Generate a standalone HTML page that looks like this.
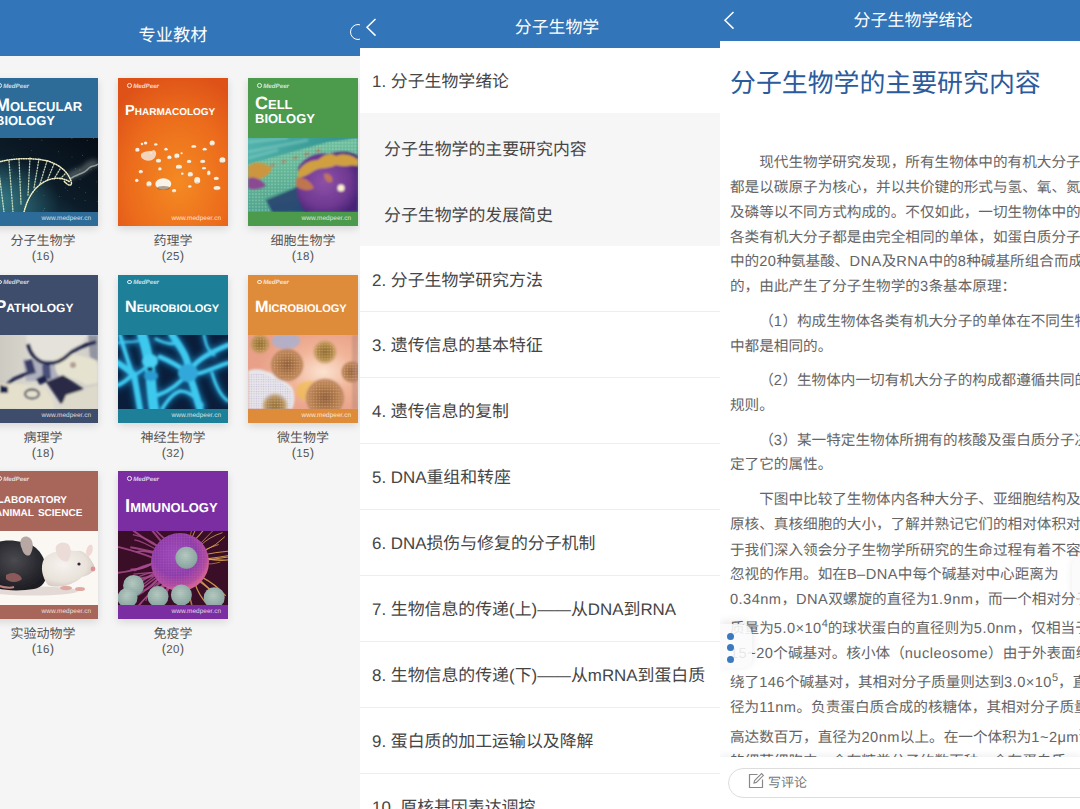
<!DOCTYPE html>
<html lang="zh-CN"><head><meta charset="utf-8">
<style>
*{margin:0;padding:0;box-sizing:border-box}
html,body{text-spacing-trim:space-all;text-rendering:geometricPrecision;width:1080px;height:809px;overflow:hidden;background:#f5f5f5;font-family:"Liberation Sans",sans-serif}
.abs{position:absolute}
.hdr{background:#3275b8;color:#fff}
.p1{left:0;top:0;width:380px;height:809px;background:#f5f5f5;overflow:hidden}
.p2{left:360px;top:0;width:360px;height:809px;background:#fff;overflow:hidden}
.p3{left:720px;top:0;width:360px;height:809px;background:#fff;overflow:hidden}
.cover{position:absolute;width:110px;height:148px;overflow:hidden;box-shadow:0 3px 8px rgba(0,0,0,0.12)}
.lbl{position:absolute;width:150px;text-align:center;font-size:13px;color:#555;line-height:15px}
.item{position:absolute;left:12px;font-size:16.9px;color:#454545;white-space:nowrap;line-height:20px}
.sep{position:absolute;left:0;width:361px;height:1px;background:#eeeef0}
.cover .img{position:absolute;left:0;width:110px;overflow:hidden}
.logo{position:absolute;left:9px;top:4.5px;font-size:6.2px;font-style:italic;font-weight:bold;color:rgba(255,255,255,0.78);line-height:8px;white-space:nowrap}
.lg{display:inline-block;width:4.6px;height:4.6px;border-radius:50%;border:1.3px solid rgba(255,255,255,0.85);margin-right:1.6px;vertical-align:-0.3px}
.ttl{position:absolute;left:7px;font-weight:bold;font-variant:small-caps;color:#fff;white-space:nowrap}
.url{position:absolute;right:7px;bottom:3px;font-size:6.5px;line-height:8px;white-space:nowrap}
.num{letter-spacing:0.3px}.num span{font-size:11.5px}
 .lt{letter-spacing:0.45px}
 .ln{position:absolute;left:10px;font-size:14.62px;color:#656565;white-space:nowrap;line-height:18px}
</style></head><body>

<!-- LEFT PANEL -->
<div class="abs p1">
  <div class="abs hdr" style="left:0;top:0;width:380px;height:56px"></div>
  <div class="abs" style="left:0;top:24.5px;width:346px;text-align:center;color:#fff;font-size:17.2px;line-height:20px">专业教材</div>
  <div class="abs" style="left:350px;top:24px;width:16px;height:16px;border:1.8px solid #fff;border-radius:50%"></div>
<div class="cover" style="left:-12px;top:78px;background:#2d6c99">
<div class="img" style="top:60px;height:74px"><svg width="110" height="74" viewBox="0 0 110 74" style="display:block"><defs><linearGradient id="g1" x1="1" y1="0" x2="0" y2="1"><stop offset="0" stop-color="#060d16"/><stop offset="0.55" stop-color="#0c1c28"/><stop offset="1" stop-color="#1f4f63"/></linearGradient>
<radialGradient id="g1b" cx="0.05" cy="0.85" r="0.6"><stop offset="0" stop-color="#3c8a94" stop-opacity="0.8"/><stop offset="1" stop-color="#3c8a94" stop-opacity="0"/></radialGradient>
<filter id="bl1" x="-20%" y="-20%" width="140%" height="140%"><feGaussianBlur stdDeviation="0.4"/></filter>
<filter id="bl2" x="-50%" y="-50%" width="200%" height="200%"><feGaussianBlur stdDeviation="2.5"/></filter></defs><rect width="110" height="74" fill="url(#g1)"/><rect width="110" height="74" fill="url(#g1b)"/><path d="M80,40 C88,32 94,36 100,28 C104,24 107,27 110,24" fill="none" stroke="#c8d4d0" stroke-width="7" opacity="0.35" filter="url(#bl2)"/><g filter="url(#bl1)"><path d="M0,27 C20,20 42,19 60,23 C72,27 80,34 83,43 C85,49 80,48 76,43" fill="none" stroke="#f3efc4" stroke-linecap="round" stroke-dasharray="1 1.4" stroke-width="1.5"/><path d="M36,74 C40,58 48,47 60,42 C68,39 76,40 82,44" fill="none" stroke="#f3efc4" stroke-linecap="round" stroke-dasharray="1 1.4" stroke-width="1.5"/><line x1="2" y1="28" x2="6" y2="72" stroke="#e0ecc8" stroke-width="1.3" stroke-dasharray="1.2 1.6" stroke-linecap="round" opacity="0.85"/><line x1="10" y1="26" x2="16" y2="74" stroke="#e0ecc8" stroke-width="1.3" stroke-dasharray="1.2 1.6" stroke-linecap="round" opacity="0.85"/><line x1="21" y1="23" x2="25" y2="74" stroke="#e0ecc8" stroke-width="1.3" stroke-dasharray="1.2 1.6" stroke-linecap="round" opacity="0.85"/><line x1="31" y1="21" x2="33" y2="66" stroke="#e0ecc8" stroke-width="1.3" stroke-dasharray="1.2 1.6" stroke-linecap="round" opacity="0.85"/><line x1="42" y1="20" x2="40" y2="57" stroke="#e0ecc8" stroke-width="1.3" stroke-dasharray="1.2 1.6" stroke-linecap="round" opacity="0.85"/><line x1="51" y1="21" x2="46" y2="50" stroke="#e0ecc8" stroke-width="1.3" stroke-dasharray="1.2 1.6" stroke-linecap="round" opacity="0.85"/><line x1="59" y1="23" x2="52" y2="46" stroke="#e0ecc8" stroke-width="1.3" stroke-dasharray="1.2 1.6" stroke-linecap="round" opacity="0.85"/><line x1="66" y1="26" x2="59" y2="43" stroke="#e0ecc8" stroke-width="1.3" stroke-dasharray="1.2 1.6" stroke-linecap="round" opacity="0.85"/><line x1="72" y1="31" x2="66" y2="41" stroke="#e0ecc8" stroke-width="1.3" stroke-dasharray="1.2 1.6" stroke-linecap="round" opacity="0.85"/><line x1="77" y1="36" x2="72" y2="41" stroke="#e0ecc8" stroke-width="1.3" stroke-dasharray="1.2 1.6" stroke-linecap="round" opacity="0.85"/></g><path d="M82,41 C90,35 95,37 101,30 C104,27 107,29 110,26" fill="none" stroke="#dfe6d8" stroke-width="1.4" opacity="0.55" filter="url(#bl1)"/><circle cx="14.8" cy="62.7" r="0.45" fill="#9fd0c8" opacity="0.55"/><circle cx="84.0" cy="18.9" r="0.45" fill="#9fd0c8" opacity="0.55"/><circle cx="54.5" cy="33.3" r="0.45" fill="#9fd0c8" opacity="0.55"/><circle cx="71.7" cy="58.4" r="0.45" fill="#9fd0c8" opacity="0.55"/><circle cx="10.3" cy="2.1" r="0.45" fill="#9fd0c8" opacity="0.55"/><circle cx="91.9" cy="32.0" r="0.45" fill="#9fd0c8" opacity="0.55"/><circle cx="83.9" cy="0.2" r="0.45" fill="#9fd0c8" opacity="0.55"/><circle cx="49.0" cy="53.4" r="0.45" fill="#9fd0c8" opacity="0.55"/><circle cx="25.2" cy="70.0" r="0.45" fill="#9fd0c8" opacity="0.55"/><circle cx="99.2" cy="2.3" r="0.45" fill="#9fd0c8" opacity="0.55"/><circle cx="2.8" cy="40.1" r="0.45" fill="#9fd0c8" opacity="0.55"/><circle cx="103.3" cy="28.2" r="0.45" fill="#9fd0c8" opacity="0.55"/><circle cx="23.8" cy="31.2" r="0.45" fill="#9fd0c8" opacity="0.55"/><circle cx="3.2" cy="16.4" r="0.45" fill="#9fd0c8" opacity="0.55"/><circle cx="48.2" cy="36.7" r="0.45" fill="#9fd0c8" opacity="0.55"/><circle cx="25.6" cy="17.1" r="0.45" fill="#9fd0c8" opacity="0.55"/><circle cx="24.1" cy="34.0" r="0.45" fill="#9fd0c8" opacity="0.55"/><circle cx="31.9" cy="1.6" r="0.45" fill="#9fd0c8" opacity="0.55"/><circle cx="92.1" cy="41.2" r="0.45" fill="#9fd0c8" opacity="0.55"/><circle cx="70.7" cy="13.8" r="0.45" fill="#9fd0c8" opacity="0.55"/><circle cx="109.2" cy="63.6" r="0.45" fill="#9fd0c8" opacity="0.55"/><circle cx="13.3" cy="24.6" r="0.45" fill="#9fd0c8" opacity="0.55"/><circle cx="79.4" cy="52.6" r="0.45" fill="#9fd0c8" opacity="0.55"/><circle cx="103.0" cy="31.2" r="0.45" fill="#9fd0c8" opacity="0.55"/><circle cx="91.3" cy="49.6" r="0.45" fill="#9fd0c8" opacity="0.55"/><circle cx="33.4" cy="43.5" r="0.45" fill="#9fd0c8" opacity="0.55"/><circle cx="97.1" cy="62.6" r="0.45" fill="#9fd0c8" opacity="0.55"/><circle cx="55.6" cy="43.6" r="0.45" fill="#9fd0c8" opacity="0.55"/><circle cx="3.8" cy="18.0" r="0.45" fill="#9fd0c8" opacity="0.55"/><circle cx="87.7" cy="30.7" r="0.45" fill="#9fd0c8" opacity="0.55"/><circle cx="19.0" cy="40.6" r="0.45" fill="#9fd0c8" opacity="0.55"/><circle cx="77.3" cy="49.9" r="0.45" fill="#9fd0c8" opacity="0.55"/><circle cx="41.2" cy="32.5" r="0.45" fill="#9fd0c8" opacity="0.55"/><circle cx="55.9" cy="57.6" r="0.45" fill="#9fd0c8" opacity="0.55"/><circle cx="57.3" cy="29.1" r="0.45" fill="#9fd0c8" opacity="0.55"/><circle cx="53.9" cy="2.2" r="0.45" fill="#9fd0c8" opacity="0.55"/><circle cx="4.8" cy="52.1" r="0.45" fill="#9fd0c8" opacity="0.55"/><circle cx="108.2" cy="43.9" r="0.45" fill="#9fd0c8" opacity="0.55"/><circle cx="43.3" cy="12.6" r="0.45" fill="#9fd0c8" opacity="0.55"/><circle cx="55.2" cy="72.7" r="0.45" fill="#9fd0c8" opacity="0.55"/><circle cx="84.8" cy="39.9" r="0.45" fill="#9fd0c8" opacity="0.55"/><circle cx="94.6" cy="17.2" r="0.45" fill="#9fd0c8" opacity="0.55"/><circle cx="56.5" cy="70.5" r="0.45" fill="#9fd0c8" opacity="0.55"/><circle cx="63.6" cy="34.0" r="0.45" fill="#9fd0c8" opacity="0.55"/><circle cx="29.6" cy="40.6" r="0.45" fill="#9fd0c8" opacity="0.55"/><circle cx="105.3" cy="0.4" r="0.45" fill="#9fd0c8" opacity="0.55"/><circle cx="86.2" cy="60.7" r="0.45" fill="#9fd0c8" opacity="0.55"/><circle cx="97.5" cy="54.8" r="0.45" fill="#9fd0c8" opacity="0.55"/><circle cx="89.0" cy="38.4" r="0.45" fill="#9fd0c8" opacity="0.55"/><circle cx="61.7" cy="31.5" r="0.45" fill="#9fd0c8" opacity="0.55"/></svg></div>
<div class="logo"><span class="lg"></span>MedPeer</div>
<div class="ttl" style="top:20px;font-size:18px;line-height:14px;letter-spacing:0px">Molecular<br>biology</div>
<div class="url" style="color:rgba(255,255,255,0.8)">www.medpeer.cn</div>
</div>
<div class="cover" style="left:118px;top:78px;background:#e86a1e">
<div class="img" style="top:0px;height:148px"><svg width="110" height="148" viewBox="0 0 110 148" style="display:block"><defs><radialGradient id="ph1" cx="0.55" cy="0.7" r="0.75"><stop offset="0" stop-color="#f48a22"/><stop offset="0.6" stop-color="#ec6c1c"/><stop offset="1" stop-color="#de5218"/></radialGradient>
<filter id="phb" x="-50%" y="-50%" width="200%" height="200%"><feGaussianBlur stdDeviation="0.3"/></filter></defs><rect width="110" height="148" fill="url(#ph1)"/><g filter="url(#phb)"><ellipse cx="19.4" cy="71.9" rx="2.125" ry="2.125" fill="#f8f0e2"/><ellipse cx="19.7" cy="73.65" rx="1.75" ry="0.625" fill="#a05a2a" opacity="0.3"/><ellipse cx="27.6" cy="65.1" rx="1.7" ry="1.53" fill="#f8f0e2"/><ellipse cx="27.900000000000002" cy="66.36" rx="1.4" ry="0.45" fill="#a05a2a" opacity="0.3"/><ellipse cx="37.8" cy="66.5" rx="1.7" ry="1.36" fill="#f8f0e2"/><ellipse cx="38.099999999999994" cy="67.62" rx="1.4" ry="0.4" fill="#a05a2a" opacity="0.3"/><ellipse cx="48" cy="71.2" rx="1.7" ry="1.53" fill="#f8f0e2"/><ellipse cx="48.3" cy="72.46000000000001" rx="1.4" ry="0.45" fill="#a05a2a" opacity="0.3"/><ellipse cx="40.5" cy="82.8" rx="2.55" ry="2.125" fill="#f8f0e2"/><ellipse cx="40.8" cy="84.55" rx="2.0999999999999996" ry="0.625" fill="#a05a2a" opacity="0.3"/><ellipse cx="51.4" cy="79.4" rx="2.125" ry="1.9549999999999998" fill="#f8f0e2"/><ellipse cx="51.699999999999996" cy="81.01" rx="1.75" ry="0.575" fill="#a05a2a" opacity="0.3"/><ellipse cx="58.9" cy="78" rx="2.55" ry="2.38" fill="#f8f0e2"/><ellipse cx="59.199999999999996" cy="79.96" rx="2.0999999999999996" ry="0.7" fill="#a05a2a" opacity="0.3"/><ellipse cx="63.6" cy="75.3" rx="1.105" ry="1.105" fill="#f8f0e2"/><ellipse cx="63.9" cy="76.21" rx="0.9099999999999999" ry="0.325" fill="#a05a2a" opacity="0.3"/><ellipse cx="75.8" cy="68.5" rx="2.55" ry="1.53" fill="#f8f0e2"/><ellipse cx="76.1" cy="69.76" rx="2.0999999999999996" ry="0.45" fill="#a05a2a" opacity="0.3"/><ellipse cx="94.2" cy="65.1" rx="2.55" ry="2.55" fill="#f8f0e2"/><ellipse cx="94.5" cy="67.19999999999999" rx="2.0999999999999996" ry="0.75" fill="#a05a2a" opacity="0.3"/><ellipse cx="86.7" cy="71.2" rx="2.125" ry="1.53" fill="#f8f0e2"/><ellipse cx="87.0" cy="72.46000000000001" rx="1.75" ry="0.45" fill="#a05a2a" opacity="0.3"/><ellipse cx="104.4" cy="82.1" rx="2.975" ry="2.975" fill="#f8f0e2"/><ellipse cx="104.7" cy="84.55" rx="2.4499999999999997" ry="0.875" fill="#a05a2a" opacity="0.3"/><ellipse cx="71.1" cy="83.5" rx="2.125" ry="1.87" fill="#f8f0e2"/><ellipse cx="71.39999999999999" cy="85.04" rx="1.75" ry="0.55" fill="#a05a2a" opacity="0.3"/><ellipse cx="84.7" cy="83.5" rx="2.55" ry="1.7" fill="#f8f0e2"/><ellipse cx="85.0" cy="84.9" rx="2.0999999999999996" ry="0.5" fill="#a05a2a" opacity="0.3"/><ellipse cx="60.9" cy="88.9" rx="2.975" ry="2.125" fill="#f8f0e2"/><ellipse cx="61.199999999999996" cy="90.65" rx="2.4499999999999997" ry="0.625" fill="#a05a2a" opacity="0.3"/><ellipse cx="86" cy="90.3" rx="2.125" ry="1.275" fill="#f8f0e2"/><ellipse cx="86.3" cy="91.35" rx="1.75" ry="0.375" fill="#a05a2a" opacity="0.3"/><ellipse cx="90.8" cy="95" rx="1.7" ry="2.55" fill="#f8f0e2"/><ellipse cx="91.1" cy="97.1" rx="1.4" ry="0.75" fill="#a05a2a" opacity="0.3"/><ellipse cx="72.4" cy="96.4" rx="2.55" ry="2.38" fill="#f8f0e2"/><ellipse cx="72.7" cy="98.36" rx="2.0999999999999996" ry="0.7" fill="#a05a2a" opacity="0.3"/><ellipse cx="64.3" cy="95.7" rx="1.275" ry="1.275" fill="#f8f0e2"/><ellipse cx="64.6" cy="96.75" rx="1.0499999999999998" ry="0.375" fill="#a05a2a" opacity="0.3"/><ellipse cx="22.8" cy="93.7" rx="2.125" ry="1.7" fill="#f8f0e2"/><ellipse cx="23.1" cy="95.10000000000001" rx="1.75" ry="0.5" fill="#a05a2a" opacity="0.3"/><ellipse cx="18.8" cy="102.5" rx="1.7" ry="1.7" fill="#f8f0e2"/><ellipse cx="19.1" cy="103.9" rx="1.4" ry="0.5" fill="#a05a2a" opacity="0.3"/><ellipse cx="31" cy="105.9" rx="2.55" ry="2.55" fill="#f8f0e2"/><ellipse cx="31.3" cy="108.0" rx="2.0999999999999996" ry="0.75" fill="#a05a2a" opacity="0.3"/><ellipse cx="56.1" cy="112.7" rx="2.125" ry="1.7" fill="#f8f0e2"/><ellipse cx="56.4" cy="114.10000000000001" rx="1.75" ry="0.5" fill="#a05a2a" opacity="0.3"/><ellipse cx="79.2" cy="102.5" rx="2.975" ry="3.4" fill="#f8f0e2"/><ellipse cx="79.5" cy="105.3" rx="2.4499999999999997" ry="1.0" fill="#a05a2a" opacity="0.3"/><ellipse cx="71.8" cy="108.6" rx="1.7" ry="1.4449999999999998" fill="#f8f0e2"/><ellipse cx="72.1" cy="109.78999999999999" rx="1.4" ry="0.425" fill="#a05a2a" opacity="0.3"/><ellipse cx="98.3" cy="100.5" rx="2.55" ry="1.7" fill="#f8f0e2"/><ellipse cx="98.6" cy="101.9" rx="2.0999999999999996" ry="0.5" fill="#a05a2a" opacity="0.3"/><ellipse cx="99" cy="110" rx="3.4" ry="2.125" fill="#f8f0e2"/><ellipse cx="99.3" cy="111.75" rx="2.8" ry="0.625" fill="#a05a2a" opacity="0.3"/><ellipse cx="41.9" cy="91" rx="1.7" ry="1.7" fill="#f8f0e2"/><ellipse cx="42.199999999999996" cy="92.4" rx="1.4" ry="0.5" fill="#a05a2a" opacity="0.3"/><ellipse cx="24" cy="66" rx="1.275" ry="1.275" fill="#f8f0e2"/><ellipse cx="24.3" cy="67.05" rx="1.0499999999999998" ry="0.375" fill="#a05a2a" opacity="0.3"/><ellipse cx="33" cy="75" rx="1.275" ry="1.275" fill="#f8f0e2"/><ellipse cx="33.3" cy="76.05" rx="1.0499999999999998" ry="0.375" fill="#a05a2a" opacity="0.3"/><path d="M23,76 C27,72 33,74 36,72 C40,74 38,80 34,82 C30,84 25,82 23,79 Z" fill="#f4e4d6" opacity="0.85"/><ellipse cx="45.3" cy="106" rx="8" ry="5.8" fill="#f8f3ea"/><ellipse cx="45.5" cy="110" rx="6.5" ry="2" fill="#5a3a20" opacity="0.45"/></g></svg></div>
<div class="logo"><span class="lg"></span>MedPeer</div>
<div class="ttl" style="top:26px;font-size:14.6px;line-height:14px;letter-spacing:0px">Pharmacology</div>
<div class="url" style="color:rgba(255,255,255,0.8)">www.medpeer.cn</div>
</div>
<div class="cover" style="left:248px;top:78px;background:#4c9a4c">
<div class="img" style="top:60px;height:74px"><svg width="110" height="74" viewBox="0 0 110 74" style="display:block"><defs><linearGradient id="c1" x1="0" y1="0" x2="1" y2="0.3"><stop offset="0" stop-color="#52b4ac"/><stop offset="1" stop-color="#2a8a88"/></linearGradient>
<linearGradient id="c2" x1="0" y1="0" x2="0.3" y2="1"><stop offset="0" stop-color="#80c8a8"/><stop offset="0.5" stop-color="#62b498"/><stop offset="1" stop-color="#4a9c8c"/></linearGradient>
<radialGradient id="c3" cx="0.45" cy="0.5" r="0.6"><stop offset="0" stop-color="#8e50a8"/><stop offset="0.7" stop-color="#6e3890"/><stop offset="1" stop-color="#4a2478"/></radialGradient>
<pattern id="cdots" width="3.2" height="3.2" patternUnits="userSpaceOnUse"><circle cx="1.6" cy="1.6" r="1.1" fill="#a8e0b8" opacity="0.4"/></pattern>
<filter id="cb" x="-30%" y="-30%" width="160%" height="160%"><feGaussianBlur stdDeviation="0.9"/></filter>
<filter id="cb2" x="-30%" y="-30%" width="160%" height="160%"><feGaussianBlur stdDeviation="0.35"/></filter></defs><rect width="110" height="74" fill="url(#c1)"/><g filter="url(#cb)"><path d="M0,4 L40,0 M0,14 L60,2 M0,20 L30,12" stroke="#9ad8d0" stroke-width="3" opacity="0.4"/><path d="M0,26 L80,4 L110,0 L110,26 L62,58 L40,74 L0,74 Z" fill="url(#c2)"/><path d="M18,62 L52,48 L60,74 L24,74 Z" fill="#22306a" opacity="0.75"/><path d="M22,28 L78,10" stroke="#b06040" stroke-width="2.4" stroke-dasharray="5 7" opacity="0.85"/></g><path d="M0,26 L80,4 L110,0 L110,26 L62,58 L54,46 L16,60 L22,74 L0,74 Z" fill="url(#cdots)" filter="url(#cb2)"/><g filter="url(#cb)"><path d="M50,30 C56,20 68,14 80,16 C94,12 104,14 110,18 L110,74 L58,74 C50,66 46,50 50,38 Z" fill="url(#c3)"/><path d="M50,34 C54,26 62,22 70,22 C76,16 84,14 88,18 C96,14 106,18 110,22 L110,28 C102,26 96,30 88,27 C80,32 72,28 64,34 C58,38 52,40 50,40 Z" fill="#d0a040"/><path d="M48,40 C54,38 62,42 66,50 C60,54 52,52 48,48 Z" fill="#c87c48" opacity="0.9"/><path d="M76,36 C80,34 86,38 84,44 C80,46 76,42 76,36 Z" fill="#d08048" opacity="0.8"/><path d="M0,28 C8,22 16,24 24,30 C22,38 12,42 0,44 Z" fill="#cc9640"/><path d="M0,40 C8,38 14,42 18,48 C10,52 4,52 0,50 Z" fill="#8a4a90"/><circle cx="93" cy="50" r="3.5" fill="#fff0d0"/></g></svg></div>
<div class="logo"><span class="lg"></span>MedPeer</div>
<div class="ttl" style="top:18px;font-size:18px;line-height:14px;letter-spacing:0px">Cell<br>biology</div>
<div class="url" style="color:rgba(255,255,255,0.8)">www.medpeer.cn</div>
</div>
<div class="cover" style="left:-12px;top:274.5px;background:#3f4d6c">
<div class="img" style="top:60px;height:74px"><svg width="110" height="74" viewBox="0 0 110 74" style="display:block"><defs><filter id="pb" x="-30%" y="-30%" width="160%" height="160%"><feGaussianBlur stdDeviation="0.9"/></filter>
<linearGradient id="pg" x1="0" y1="0" x2="1" y2="0"><stop offset="0" stop-color="#c8c6bc"/><stop offset="0.5" stop-color="#dddbd2"/><stop offset="1" stop-color="#cfcdc6"/></linearGradient></defs><rect width="110" height="74" fill="url(#pg)"/><g filter="url(#pb)"><path d="M38,0 L100,0 L92,10 C84,22 70,28 56,28 C46,26 42,18 40,10 Z" fill="#e4e2da"/><path d="M100,0 L110,0 L110,26 L102,22 Z" fill="#9294a2"/><path d="M35,24 L70,26 L72,46 L38,46 Z" fill="#aeb0be"/><path d="M36,26 L44,24 L48,38 L40,40 Z" fill="#3a3e66"/><path d="M54,30 L62,30 L63,44 L55,44 Z" fill="#4a5078"/><path d="M16,52 L26,44 L40,38" fill="none" stroke="#1e2248" stroke-width="3.4"/><path d="M48,44 L56,40 L60,46 L52,50 Z" fill="#1e2248"/><path d="M70,20 C80,18 96,20 108,26 L110,30 L110,48 L98,50 C90,44 80,42 70,40 C66,34 66,26 70,20 Z" fill="#e6e2d0"/><path d="M40,9 C42,18 48,26 57,28 C66,29 74,26 80,20 C86,14 96,10 108,7" fill="none" stroke="#1e2248" stroke-width="3.6"/><path d="M58,47 L75,40 L96,54 L73,69 Z" fill="#2a2c46"/><path d="M0,52 C16,46 40,48 56,54 C64,60 66,68 66,74 L0,74 Z" fill="#e4e0cc"/><path d="M12,50 L20,52 L20,58 L12,58 Z" fill="#1e2248"/><ellipse cx="44" cy="59" rx="7" ry="4.5" fill="none" stroke="#2e3250" stroke-width="1.8"/><path d="M78,60 L110,50 L110,74 L72,74 Z" fill="#dedacb"/><circle cx="85" cy="30" r="3" fill="#8a7068" opacity="0.6"/></g></svg></div>
<div class="logo"><span class="lg"></span>MedPeer</div>
<div class="ttl" style="top:25px;font-size:17px;line-height:14px;letter-spacing:0px">Pathology</div>
<div class="url" style="color:rgba(255,255,255,0.8)">www.medpeer.cn</div>
</div>
<div class="cover" style="left:118px;top:274.5px;background:#1d7f98">
<div class="img" style="top:60px;height:74px"><svg width="110" height="74" viewBox="0 0 110 74" style="display:block"><defs><filter id="nb" x="-30%" y="-30%" width="160%" height="160%"><feGaussianBlur stdDeviation="0.8"/></filter>
<filter id="nglow" x="-30%" y="-30%" width="160%" height="160%"><feGaussianBlur stdDeviation="2.5"/></filter></defs><rect width="110" height="74" fill="#0a1e3c"/><g filter="url(#nglow)"><path d="M24,0 C28,10 30,22 32,34 C33,48 34,62 36,74" fill="none" stroke="#1c8cc8" stroke-width="16" stroke-linecap="round" opacity="0.45"/><path d="M0,28 C6,32 12,36 16,40 C18,50 20,62 22,74" fill="none" stroke="#1c8cc8" stroke-width="12" stroke-linecap="round" opacity="0.45"/><path d="M2,0 C6,14 10,26 14,38" fill="none" stroke="#1c8cc8" stroke-width="10" stroke-linecap="round" opacity="0.45"/><path d="M0,50 C6,48 10,44 14,40" fill="none" stroke="#1c8cc8" stroke-width="10" stroke-linecap="round" opacity="0.45"/><path d="M16,40 C22,38 26,34 30,30" fill="none" stroke="#1c8cc8" stroke-width="9" stroke-linecap="round" opacity="0.45"/><path d="M42,22 C52,26 62,32 70,38 C76,28 86,20 110,10" fill="none" stroke="#1c8cc8" stroke-width="11" stroke-linecap="round" opacity="0.45"/><path d="M70,38 C72,26 64,14 54,0" fill="none" stroke="#1c8cc8" stroke-width="13" stroke-linecap="round" opacity="0.45"/><path d="M70,38 C80,42 96,32 110,28" fill="none" stroke="#1c8cc8" stroke-width="10" stroke-linecap="round" opacity="0.45"/><path d="M70,38 C76,50 78,62 82,74" fill="none" stroke="#1c8cc8" stroke-width="13" stroke-linecap="round" opacity="0.45"/><path d="M70,38 C62,48 52,56 40,60" fill="none" stroke="#1c8cc8" stroke-width="10" stroke-linecap="round" opacity="0.45"/><path d="M44,74 C50,64 56,58 62,56 C70,56 78,62 84,70" fill="none" stroke="#1c8cc8" stroke-width="9.5" stroke-linecap="round" opacity="0.45"/><path d="M38,4 C46,8 52,10 58,8" fill="none" stroke="#1c8cc8" stroke-width="9" stroke-linecap="round" opacity="0.45"/><path d="M86,0 C88,10 90,16 96,20" fill="none" stroke="#1c8cc8" stroke-width="8.5" stroke-linecap="round" opacity="0.45"/><path d="M94,38 C98,52 104,62 110,66" fill="none" stroke="#1c8cc8" stroke-width="9" stroke-linecap="round" opacity="0.45"/><path d="M0,8 C6,6 12,8 20,6" fill="none" stroke="#1c8cc8" stroke-width="8" stroke-linecap="round" opacity="0.45"/></g><g filter="url(#nb)"><path d="M24,0 C28,10 30,22 32,34 C33,48 34,62 36,74" fill="none" stroke="#3ec8ee" stroke-width="10" stroke-linecap="round"/><path d="M0,28 C6,32 12,36 16,40 C18,50 20,62 22,74" fill="none" stroke="#3ec8ee" stroke-width="6" stroke-linecap="round"/><path d="M2,0 C6,14 10,26 14,38" fill="none" stroke="#3ec8ee" stroke-width="4" stroke-linecap="round"/><path d="M0,50 C6,48 10,44 14,40" fill="none" stroke="#3ec8ee" stroke-width="4" stroke-linecap="round"/><path d="M16,40 C22,38 26,34 30,30" fill="none" stroke="#3ec8ee" stroke-width="3" stroke-linecap="round"/><path d="M42,22 C52,26 62,32 70,38 C76,28 86,20 110,10" fill="none" stroke="#3ec8ee" stroke-width="5" stroke-linecap="round"/><path d="M70,38 C72,26 64,14 54,0" fill="none" stroke="#3ec8ee" stroke-width="7" stroke-linecap="round"/><path d="M70,38 C80,42 96,32 110,28" fill="none" stroke="#3ec8ee" stroke-width="4" stroke-linecap="round"/><path d="M70,38 C76,50 78,62 82,74" fill="none" stroke="#3ec8ee" stroke-width="7" stroke-linecap="round"/><path d="M70,38 C62,48 52,56 40,60" fill="none" stroke="#3ec8ee" stroke-width="4" stroke-linecap="round"/><path d="M44,74 C50,64 56,58 62,56 C70,56 78,62 84,70" fill="none" stroke="#3ec8ee" stroke-width="3.5" stroke-linecap="round"/><path d="M38,4 C46,8 52,10 58,8" fill="none" stroke="#3ec8ee" stroke-width="3" stroke-linecap="round"/><path d="M86,0 C88,10 90,16 96,20" fill="none" stroke="#3ec8ee" stroke-width="2.5" stroke-linecap="round"/><path d="M94,38 C98,52 104,62 110,66" fill="none" stroke="#3ec8ee" stroke-width="3" stroke-linecap="round"/><path d="M0,8 C6,6 12,8 20,6" fill="none" stroke="#3ec8ee" stroke-width="2" stroke-linecap="round"/><ellipse cx="32" cy="26" rx="8" ry="7" fill="#48d0f2"/><ellipse cx="33" cy="41" rx="7" ry="5" fill="#2a9cd0"/><ellipse cx="70" cy="38" rx="10" ry="9" fill="#30a8da"/><ellipse cx="32" cy="34" rx="3" ry="2" fill="#0a2a50"/></g></svg></div>
<div class="logo"><span class="lg"></span>MedPeer</div>
<div class="ttl" style="top:25px;font-size:16.2px;line-height:14px;letter-spacing:0px">Neurobiology</div>
<div class="url" style="color:rgba(255,255,255,0.8)">www.medpeer.cn</div>
</div>
<div class="cover" style="left:248px;top:274.5px;background:#df8c3a">
<div class="img" style="top:60px;height:74px"><svg width="110" height="74" viewBox="0 0 110 74" style="display:block"><defs><radialGradient id="m1" cx="0.68" cy="0.5" r="0.6"><stop offset="0" stop-color="#fbe2d0"/><stop offset="0.5" stop-color="#f1b59a"/><stop offset="1" stop-color="#e8a088"/></radialGradient>
<radialGradient id="ball" cx="0.5" cy="0.5" r="0.5"><stop offset="0" stop-color="#8a5a38"/><stop offset="0.6" stop-color="#b07a4c"/><stop offset="0.9" stop-color="#c08860"/><stop offset="1" stop-color="#d0a080" stop-opacity="0.3"/></radialGradient>
<radialGradient id="ballg" cx="0.5" cy="0.5" r="0.5"><stop offset="0" stop-color="#8a6830"/><stop offset="0.7" stop-color="#b08a48"/><stop offset="1" stop-color="#c8a060" stop-opacity="0.3"/></radialGradient>
<pattern id="mdot" width="2.8" height="2.8" patternUnits="userSpaceOnUse"><circle cx="1.4" cy="1.4" r="0.8" fill="#e8b888" opacity="0.6"/></pattern>
<pattern id="mdot2" width="2.4" height="2.4" patternUnits="userSpaceOnUse"><circle cx="1.2" cy="1.2" r="0.7" fill="#a8a0c8" opacity="0.5"/></pattern>
<filter id="mb" x="-30%" y="-30%" width="160%" height="160%"><feGaussianBlur stdDeviation="1"/></filter>
<filter id="mb2" x="-30%" y="-30%" width="160%" height="160%"><feGaussianBlur stdDeviation="0.4"/></filter></defs><rect width="110" height="74" fill="url(#m1)"/><g filter="url(#mb)"><ellipse cx="62" cy="56" rx="14" ry="10" fill="#f0c040" opacity="0.6"/><path d="M0,36 C12,30 30,40 44,52 C48,62 46,70 44,74 L0,74 Z" fill="#e8e6ea"/><ellipse cx="38" cy="6" rx="14" ry="8" fill="#aab0d0" opacity="0.85"/><circle cx="12" cy="9" r="10" fill="url(#ballg)"/><circle cx="39" cy="30" r="17" fill="url(#ball)"/><circle cx="77" cy="17" r="12" fill="url(#ballg)"/><circle cx="104" cy="37" r="11" fill="url(#ball)"/><circle cx="27" cy="71" r="13" fill="url(#ballg)"/><circle cx="77" cy="63" r="20" fill="url(#ball)"/><rect x="104" y="0" width="6" height="74" fill="#b08070" opacity="0.4"/></g><g filter="url(#mb2)"><path d="M0,40 C12,34 30,44 42,54 C46,62 44,70 42,74 L0,74 Z" fill="url(#mdot2)"/><circle cx="12" cy="9" r="8" fill="url(#mdot)"/><circle cx="39" cy="30" r="14" fill="url(#mdot)"/><circle cx="77" cy="17" r="10" fill="url(#mdot)"/><circle cx="104" cy="37" r="9" fill="url(#mdot)"/><circle cx="27" cy="71" r="11" fill="url(#mdot)"/><circle cx="77" cy="63" r="17" fill="url(#mdot)"/></g></svg></div>
<div class="logo"><span class="lg"></span>MedPeer</div>
<div class="ttl" style="top:25px;font-size:16.2px;line-height:14px;letter-spacing:0px">Microbiology</div>
<div class="url" style="color:rgba(255,255,255,0.8)">www.medpeer.cn</div>
</div>
<div class="cover" style="left:-12px;top:471px;background:#a8665a">
<div class="img" style="top:60px;height:74px"><svg width="110" height="74" viewBox="0 0 110 74" style="display:block"><defs><radialGradient id="bm" cx="0.45" cy="0.4" r="0.6"><stop offset="0" stop-color="#4a4a50"/><stop offset="0.6" stop-color="#2e2e34"/><stop offset="1" stop-color="#1e1e22"/></radialGradient>
<radialGradient id="wm" cx="0.4" cy="0.4" r="0.65"><stop offset="0" stop-color="#f6f2ee"/><stop offset="0.7" stop-color="#e8e2da"/><stop offset="1" stop-color="#d2c8c0"/></radialGradient>
<filter id="lb" x="-30%" y="-30%" width="160%" height="160%"><feGaussianBlur stdDeviation="0.7"/></filter></defs><rect width="110" height="74" fill="#fbf8f4"/><g filter="url(#lb)"><ellipse cx="45" cy="60" rx="45" ry="4.5" fill="#d8ccc8" opacity="0.7"/><path d="M0,16 C8,9 22,8 34,11 C46,12 56,22 58,36 C60,48 56,56 46,58 C34,60 18,60 8,57 C2,55 0,50 0,44 Z" fill="url(#bm)"/><path d="M34,18 C30,10 34,4 40,6 C46,8 46,18 42,24 C38,26 35,22 34,18 Z" fill="#b8a8a4"/><path d="M18,44 C24,40 32,42 34,48 C30,52 22,52 18,48 Z" fill="#8a5a5a"/><path d="M8,54 C14,56 20,58 26,56" stroke="#c08080" stroke-width="2" fill="none"/><path d="M56,28 C62,20 76,18 88,20 C96,18 102,26 106,34 C108,40 102,44 94,46 C86,54 70,58 60,54 C54,46 52,36 56,28 Z" fill="url(#wm)"/><path d="M68,20 C66,14 72,10 78,12 C84,14 84,24 80,30 C76,32 70,28 68,20 Z" fill="#ecdcd8"/><path d="M98,22 C98,16 102,12 104,14 C106,18 104,24 100,26 Z" fill="#f0d8d4"/><circle cx="91" cy="33" r="1.6" fill="#3a2040"/><circle cx="105" cy="38" r="2.4" fill="#e09090"/><ellipse cx="78" cy="57" rx="6" ry="2.2" fill="#e0a8a0"/><ellipse cx="92" cy="58" rx="5" ry="2" fill="#e0a8a0"/></g></svg></div>
<div class="logo"><span class="lg"></span>MedPeer</div>
<div class="ttl" style="top:22px;font-size:14.4px;line-height:13px;letter-spacing:0px">Laboratory<br>animal science</div>
<div class="url" style="color:rgba(255,255,255,0.8)">www.medpeer.cn</div>
</div>
<div class="cover" style="left:118px;top:471px;background:#7b2ea2">
<div class="img" style="top:60px;height:74px"><svg width="110" height="74" viewBox="0 0 110 74" style="display:block"><defs><radialGradient id="i1" cx="0.42" cy="0.38" r="0.6"><stop offset="0" stop-color="#9a48b8"/><stop offset="0.6" stop-color="#8a3aa8"/><stop offset="0.9" stop-color="#b04a9a"/><stop offset="1" stop-color="#d06090"/></radialGradient>
<radialGradient id="i2" cx="0.45" cy="0.4" r="0.6"><stop offset="0" stop-color="#b0c4bc"/><stop offset="1" stop-color="#809c98"/></radialGradient>
<pattern id="itex" width="2.6" height="2.6" patternUnits="userSpaceOnUse"><circle cx="1.3" cy="1.3" r="0.8" fill="#d070c8" opacity="0.35"/></pattern>
<pattern id="itex2" width="2" height="2" patternUnits="userSpaceOnUse"><circle cx="1" cy="1" r="0.6" fill="#e0ece8" opacity="0.35"/></pattern>
<filter id="ib" x="-30%" y="-30%" width="160%" height="160%"><feGaussianBlur stdDeviation="0.5"/></filter></defs><rect width="110" height="74" fill="#3a0e26"/><g filter="url(#ib)"><path d="M39.1,43.3 Q28.5,50.5 17.4,59.9" fill="none" stroke="#a84a8e" stroke-width="1.1" opacity="0.85"/><path d="M36.0,32.6 Q22.8,35.5 16.0,39.7" fill="none" stroke="#a84a8e" stroke-width="2.0" opacity="0.85"/><path d="M47.2,52.4 Q39.7,59.9 31.0,69.2" fill="none" stroke="#a84a8e" stroke-width="2.2" opacity="0.85"/><path d="M51.3,54.7 Q41.1,74.9 37.0,98.2" fill="none" stroke="#a84a8e" stroke-width="2.0" opacity="0.85"/><path d="M44.5,50.2 Q31.6,60.9 18.0,78.7" fill="none" stroke="#a84a8e" stroke-width="1.1" opacity="0.85"/><path d="M43.4,49.1 Q30.4,63.8 16.1,79.1" fill="none" stroke="#a84a8e" stroke-width="1.4" opacity="0.85"/><path d="M40.8,16.0 Q23.3,6.9 5.4,-8.3" fill="none" stroke="#a84a8e" stroke-width="1.9" opacity="0.85"/><path d="M40.2,45.2 Q24.5,56.4 4.7,73.2" fill="none" stroke="#a84a8e" stroke-width="1.6" opacity="0.85"/><path d="M51.7,54.9 Q44.7,71.0 31.6,90.2" fill="none" stroke="#a84a8e" stroke-width="1.8" opacity="0.85"/><path d="M36.3,27.3 Q21.8,21.3 0.1,15.8" fill="none" stroke="#a84a8e" stroke-width="1.8" opacity="0.85"/><path d="M50.5,54.3 Q43.0,68.1 30.3,85.3" fill="none" stroke="#a84a8e" stroke-width="1.5" opacity="0.85"/><path d="M37.3,22.8 Q24.8,18.4 18.5,21.1" fill="none" stroke="#a84a8e" stroke-width="1.9" opacity="0.85"/><path d="M46.9,52.2 Q36.6,60.7 33.0,70.1" fill="none" stroke="#a84a8e" stroke-width="1.7" opacity="0.85"/><path d="M44.4,11.9 Q31.8,-3.6 20.6,-16.8" fill="none" stroke="#a84a8e" stroke-width="2.1" opacity="0.85"/><path d="M48.0,9.1 Q37.5,0.2 31.3,-8.4" fill="none" stroke="#a84a8e" stroke-width="1.7" opacity="0.85"/><path d="M41.1,46.5 Q34.3,56.5 26.4,59.3" fill="none" stroke="#a84a8e" stroke-width="1.8" opacity="0.85"/><path d="M36.0,32.1 Q20.4,39.3 -1.5,42.1" fill="none" stroke="#a84a8e" stroke-width="2.0" opacity="0.85"/><path d="M40.9,15.8 Q29.0,6.2 14.9,3.6" fill="none" stroke="#a84a8e" stroke-width="1.1" opacity="0.85"/><path d="M43.2,49.0 Q31.5,56.7 27.7,70.0" fill="none" stroke="#a84a8e" stroke-width="1.1" opacity="0.85"/><path d="M38.1,41.1 Q25.3,42.3 18.1,47.4" fill="none" stroke="#a84a8e" stroke-width="1.4" opacity="0.85"/><path d="M38.0,41.1 Q26.4,42.0 15.4,43.1" fill="none" stroke="#a84a8e" stroke-width="1.1" opacity="0.85"/><path d="M48.3,53.1 Q39.6,60.2 36.3,74.9" fill="none" stroke="#a84a8e" stroke-width="2.1" opacity="0.85"/><path d="M36.0,31.3 Q24.5,38.8 12.6,38.6" fill="none" stroke="#a84a8e" stroke-width="2.0" opacity="0.85"/><path d="M37.9,21.3 Q27.2,19.0 12.3,16.2" fill="none" stroke="#a84a8e" stroke-width="1.9" opacity="0.85"/><path d="M38.9,43.0 Q29.3,47.9 14.1,48.0" fill="none" stroke="#a84a8e" stroke-width="2.0" opacity="0.85"/><path d="M39.0,18.8 Q23.9,10.0 16.3,8.8" fill="none" stroke="#a84a8e" stroke-width="1.3" opacity="0.85"/><path d="M41.2,46.7 Q26.4,62.9 4.6,71.4" fill="none" stroke="#a84a8e" stroke-width="2.1" opacity="0.85"/><path d="M38.0,41.1 Q24.8,49.1 16.2,55.2" fill="none" stroke="#a84a8e" stroke-width="2.1" opacity="0.85"/><path d="M76.9,52.3 Q80.5,63.8 89.1,73.3" fill="none" stroke="#e0a850" stroke-width="1.2" opacity="0.85"/><path d="M80.1,49.6 Q92.1,57.7 100.6,67.8" fill="none" stroke="#e0a850" stroke-width="1.2" opacity="0.85"/><path d="M68.1,56.3 Q72.5,65.4 74.2,78.4" fill="none" stroke="#e0a850" stroke-width="0.7" opacity="0.85"/><path d="M76.3,9.3 Q88.6,-2.3 97.0,-19.6" fill="none" stroke="#e0a850" stroke-width="1.1" opacity="0.85"/><path d="M85.7,20.3 Q99.1,13.9 106.8,5.7" fill="none" stroke="#e0a850" stroke-width="1.0" opacity="0.85"/><path d="M70.8,55.5 Q71.2,65.1 75.0,77.8" fill="none" stroke="#e0a850" stroke-width="0.8" opacity="0.85"/><path d="M81.3,13.6 Q87.8,7.1 98.7,-4.3" fill="none" stroke="#e0a850" stroke-width="0.8" opacity="0.85"/><path d="M87.8,27.9 Q103.2,26.0 113.6,24.1" fill="none" stroke="#e0a850" stroke-width="1.0" opacity="0.85"/><path d="M87.9,32.7 Q92.2,33.7 102.3,31.1" fill="none" stroke="#e0a850" stroke-width="0.7" opacity="0.85"/><path d="M87.9,29.1 Q102.3,27.4 116.4,25.0" fill="none" stroke="#e0a850" stroke-width="1.1" opacity="0.85"/><path d="M73.5,7.7 Q79.5,-4.1 82.3,-15.9" fill="none" stroke="#e0a850" stroke-width="1.0" opacity="0.85"/><path d="M81.3,48.4 Q93.5,59.8 105.6,71.0" fill="none" stroke="#e0a850" stroke-width="1.1" opacity="0.85"/><path d="M87.8,27.5 Q101.2,30.3 112.2,28.6" fill="none" stroke="#e0a850" stroke-width="1.3" opacity="0.85"/><path d="M82.2,14.7 Q91.2,5.9 104.5,1.6" fill="none" stroke="#e0a850" stroke-width="0.9" opacity="0.85"/><path d="M71.2,6.7 Q74.4,0.6 74.2,-10.3" fill="none" stroke="#e0a850" stroke-width="0.7" opacity="0.85"/><path d="M83.3,45.9 Q98.3,53.7 107.6,64.8" fill="none" stroke="#e0a850" stroke-width="1.3" opacity="0.85"/><path d="M86.9,23.6 Q96.9,21.4 110.9,20.1" fill="none" stroke="#e0a850" stroke-width="1.0" opacity="0.85"/><path d="M85.4,19.6 Q90.2,16.9 100.7,13.5" fill="none" stroke="#e0a850" stroke-width="0.9" opacity="0.85"/><circle cx="62" cy="31" r="29" fill="url(#i1)"/><circle cx="62" cy="31" r="29" fill="url(#itex)"/><circle cx="68.4" cy="26.7" r="11" fill="url(#i2)"/><circle cx="15.6" cy="54.5" r="10.5" fill="url(#i2)"/><circle cx="9.5" cy="66.7" r="10" fill="url(#i2)"/><circle cx="40" cy="65.6" r="10.5" fill="url(#i2)"/><circle cx="63.4" cy="64" r="10.5" fill="url(#i2)"/><circle cx="96.2" cy="66.7" r="10.5" fill="url(#i2)"/><circle cx="68.4" cy="26.7" r="11" fill="url(#itex2)"/><circle cx="15.6" cy="54.5" r="10.5" fill="url(#itex2)"/><circle cx="9.5" cy="66.7" r="10" fill="url(#itex2)"/><circle cx="40" cy="65.6" r="10.5" fill="url(#itex2)"/><circle cx="63.4" cy="64" r="10.5" fill="url(#itex2)"/><circle cx="96.2" cy="66.7" r="10.5" fill="url(#itex2)"/></g></svg></div>
<div class="logo"><span class="lg"></span>MedPeer</div>
<div class="ttl" style="top:28px;font-size:18.6px;line-height:14px;letter-spacing:0px">Immunology</div>
<div class="url" style="color:rgba(255,255,255,0.8)">www.medpeer.cn</div>
</div>
<div class="lbl" style="left:-32px;top:233px">分子生物学<br><span class="num">(<span>16</span>)</span></div>
<div class="lbl" style="left:98px;top:233px">药理学<br><span class="num">(<span>25</span>)</span></div>
<div class="lbl" style="left:228px;top:233px">细胞生物学<br><span class="num">(<span>18</span>)</span></div>
<div class="lbl" style="left:-32px;top:429.5px">病理学<br><span class="num">(<span>18</span>)</span></div>
<div class="lbl" style="left:98px;top:429.5px">神经生物学<br><span class="num">(<span>32</span>)</span></div>
<div class="lbl" style="left:228px;top:429.5px">微生物学<br><span class="num">(<span>15</span>)</span></div>
<div class="lbl" style="left:-32px;top:626px">实验动物学<br><span class="num">(<span>16</span>)</span></div>
<div class="lbl" style="left:98px;top:626px">免疫学<br><span class="num">(<span>20</span>)</span></div>
</div>

<!-- MIDDLE PANEL -->
<div class="abs p2">
  <div class="abs hdr" style="left:0;top:0;width:361px;height:48px"></div>
  <svg class="abs" style="left:5px;top:18px" width="12" height="19" viewBox="0 0 12 19"><path d="M10.5 1 L2 9.3 L10.5 17.6" fill="none" stroke="#fff" stroke-width="1.5"/></svg>
  <div class="abs" style="left:0;top:18px;width:394px;text-align:center;color:#fff;font-size:16.9px;line-height:20px">分子生物学</div>
  <div class="abs" style="left:0;top:113px;width:361px;height:133px;background:#f6f6f6"></div>
  <div class="item" style="top:72px">1. 分子生物学绪论</div>
  <div class="item" style="top:140px;left:24px">分子生物学的主要研究内容</div>
  <div class="item" style="top:206px;left:24px">分子生物学的发展简史</div>
  <div class="item" style="top:271px">2. 分子生物学研究方法</div>
  <div class="sep" style="top:311px"></div>
  <div class="item" style="top:335.5px">3. 遗传信息的基本特征</div>
  <div class="sep" style="top:377px"></div>
  <div class="item" style="top:401.5px">4. 遗传信息的复制</div>
  <div class="sep" style="top:443px"></div>
  <div class="item" style="top:467.5px">5. DNA重组和转座</div>
  <div class="sep" style="top:509px"></div>
  <div class="item" style="top:533.5px">6. DNA损伤与修复的分子机制</div>
  <div class="sep" style="top:575px"></div>
  <div class="item" style="top:599.5px">7. 生物信息的传递(上)——从DNA到RNA</div>
  <div class="sep" style="top:641px"></div>
  <div class="item" style="top:665.5px">8. 生物信息的传递(下)——从mRNA到蛋白质</div>
  <div class="sep" style="top:707px"></div>
  <div class="item" style="top:731.5px">9. 蛋白质的加工运输以及降解</div>
  <div class="sep" style="top:773px"></div>
  <div class="item" style="top:797.5px">10. 原核基因表达调控</div>
</div>

<!-- RIGHT PANEL -->
<div class="abs p3">
  <div class="abs hdr" style="left:0;top:0;width:360px;height:41px"></div>
  <svg class="abs" style="left:3px;top:11px" width="12" height="19" viewBox="0 0 12 19"><path d="M10.5 1 L2 9.3 L10.5 17.6" fill="none" stroke="#fff" stroke-width="1.5"/></svg>
  <div class="abs" style="left:0;top:11px;width:386px;text-align:center;color:#fff;font-size:17px;line-height:20px">分子生物学绪论</div>
  <div class="abs" style="left:10px;top:68.5px;font-size:25.9px;color:#2b5b9c;white-space:nowrap;line-height:30px">分子生物学的主要研究内容</div>
  <div class="ln" style="top:153.5px">　　现代生物学研究发现，所有生物体中的有机大分子</div>
  <div class="ln" style="top:178.5px">都是以碳原子为核心，并以共价键的形式与氢、氧、氮</div>
  <div class="ln" style="top:203.5px">及磷等以不同方式构成的。不仅如此，一切生物体中的</div>
  <div class="ln" style="top:228.5px">各类有机大分子都是由完全相同的单体，如蛋白质分子</div>
  <div class="ln" style="top:252.5px">中的<span class="lt">20</span>种氨基酸、<span class="lt">DNA</span>及<span class="lt">RNA</span>中的<span class="lt">8</span>种碱基所组合而成</div>
  <div class="ln" style="top:277.5px">的，由此产生了分子生物学的<span class="lt">3</span>条基本原理：</div>
  <div class="ln" style="top:313px">　　（<span class="lt">1</span>）构成生物体各类有机大分子的单体在不同生物</div>
  <div class="ln" style="top:338px">中都是相同的。</div>
  <div class="ln" style="top:372px">　　（<span class="lt">2</span>）生物体内一切有机大分子的构成都遵循共同的</div>
  <div class="ln" style="top:396.5px">规则。</div>
  <div class="ln" style="top:431.5px">　　（<span class="lt">3</span>）某一特定生物体所拥有的核酸及蛋白质分子决</div>
  <div class="ln" style="top:456px">定了它的属性。</div>
  <div class="ln" style="top:490.5px">　　下图中比较了生物体内各种大分子、亚细胞结构及</div>
  <div class="ln" style="top:515.5px">原核、真核细胞的大小，了解并熟记它们的相对体积对</div>
  <div class="ln" style="top:542px">于我们深入领会分子生物学所研究的生命过程有着不容</div>
  <div class="ln" style="top:566px">忽视的作用。如在<span class="lt">B–DNA</span>中每个碱基对中心距离为</div>
  <div class="ln" style="top:591px"><span class="lt">0.34nm</span>，<span class="lt">DNA</span>双螺旋的直径为<span class="lt">1.9nm</span>，而一个相对分子</div>
  <div class="ln" style="top:620px">质量为<span class="lt">5.0×10</span><sup style="font-size:11px;vertical-align:6px;line-height:0">4</sup>的球状蛋白的直径则为<span class="lt">5.0nm</span>，仅相当于</div>
  <div class="ln" style="top:645px"><span class="lt">15~20</span>个碱基对。核小体（<span class="lt">nucleosome</span>）由于外表面缠</div>
  <div class="ln" style="top:674px">绕了<span class="lt">146</span>个碱基对，其相对分子质量则达到<span class="lt">3.0×10</span><sup style="font-size:11px;vertical-align:6px;line-height:0">5</sup>，直</div>
  <div class="ln" style="top:699px">径为<span class="lt">11nm</span>。负责蛋白质合成的核糖体，其相对分子质量</div>
  <div class="ln" style="top:729px">高达数百万，直径为<span class="lt">20nm</span>以上。在一个体积为<span class="lt">1~2μm</span><sup style="font-size:11px;vertical-align:6px;line-height:0">3</sup></div>
  <div class="ln" style="top:753px">的细菌细胞中，含有糖类分子约数百种，含有蛋白质</div>
  <div class="abs" style="left:0;top:757px;width:360px;height:52px;background:#fff;box-shadow:0 -3px 6px rgba(0,0,0,0.05)"></div>
  <div class="abs" style="left:8px;top:768px;width:380px;height:30px;border:1px solid #ddd;border-radius:15px;background:#fff"></div>
  <svg class="abs" style="left:27px;top:772px" width="18" height="18" viewBox="0 0 18 18"><path d="M10.5,2.5 H2.5 V15.5 H15.5 V7.5" fill="none" stroke="#888" stroke-width="1.2"/><path d="M7,11 L7.6,8.6 L14.6,1.6 L16.4,3.4 L9.4,10.4 Z" fill="none" stroke="#888" stroke-width="1.1"/></svg>
  <div class="abs" style="left:48px;top:774.5px;font-size:13px;color:#777;line-height:16px">写评论</div>
  <div class="abs" style="left:0;top:624px;width:32px;height:44px;border-radius:0 10px 10px 0;background:rgba(250,250,250,0.88);box-shadow:0 -2px 10px rgba(0,0,0,0.10)"></div>
  <div class="abs" style="left:6.5px;top:632.5px;width:7px;height:7px;border-radius:50%;background:#3a78c0"></div>
  <div class="abs" style="left:6.5px;top:644px;width:7px;height:7px;border-radius:50%;background:#3a78c0"></div>
  <div class="abs" style="left:6.5px;top:655.5px;width:7px;height:7px;border-radius:50%;background:#3a78c0"></div>
  <div class="abs" style="left:352px;top:556px;width:30px;height:44px;border-radius:10px;background:rgba(250,250,250,0.7);box-shadow:0 0 8px rgba(0,0,0,0.08)"></div>
</div>

</body></html>
